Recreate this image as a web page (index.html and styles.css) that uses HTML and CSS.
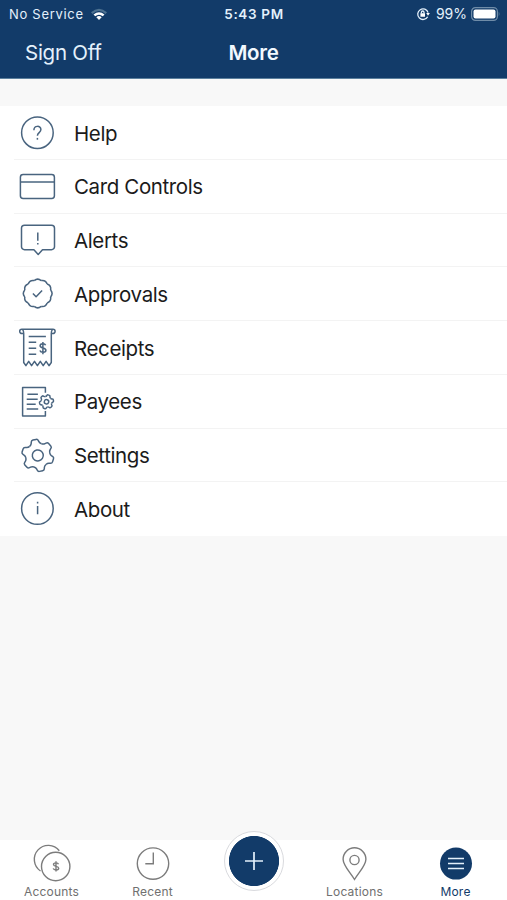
FILE: index.html
```html
<!DOCTYPE html>
<html lang="en">
<head>
<meta charset="utf-8">
<title>More</title>
<link rel="stylesheet" href="styles.css">
</head>
<body>
<svg class="defs" width="0" height="0">
  <defs>
    <path id="tooth" d="M-6.1-10.57Q-4.3-11.6-3.9-13.2L-3.6-14.4Q-3.2-16-1.6-16H1.6Q3.2-16 3.6-14.4L3.9-13.2Q4.3-11.6 6.1-10.57"/>
    <g id="gear">
      <use href="#tooth"/><use href="#tooth" transform="rotate(60)"/><use href="#tooth" transform="rotate(120)"/>
      <use href="#tooth" transform="rotate(180)"/><use href="#tooth" transform="rotate(240)"/><use href="#tooth" transform="rotate(300)"/>
    </g>
    <path id="scallop" d="M-3.45-12.9Q0-15.9 3.45-12.9"/>
    <g id="scallops"><use href="#scallop"/><use href="#scallop" transform="rotate(30)"/><use href="#scallop" transform="rotate(60)"/></g>
  </defs>
</svg>
<div class="app">
  <header class="header">
    <div class="status">
      <div class="carrier"><span>No Service</span>
        <svg width="18" height="14" viewBox="0 0 18 14"><path class="dim" d="M1 5.3Q9-2 17 5.3L15.5 7Q9 1 2.5 7Z"/><path d="M3.5 7.6Q9 2.8 14.5 7.6L12.8 9.3Q9 6 5.2 9.3ZM6.3 10.2Q9 8 11.7 10.2L9 13Z"/></svg>
      </div>
      <div class="time">5:43 PM</div>
      <div class="power">
        <svg class="lock" width="14" height="14" viewBox="0 0 14 14"><path class="line" d="M11.7 9.7A5.3 5.3 0 1 1 12.1 5.6"/><path d="M10.2 6h3.7L12 8.7ZM4.4 6.3h4.6v3.4H4.4Z"/><path class="line" d="M5.4 6.5V5.3a1.3 1.3 0 0 1 2.6 0v1.2"/></svg>
        <span>99%</span>
        <svg class="battery" width="30" height="14" viewBox="0 0 30 14"><rect class="shell" x=".6" y=".6" width="25.8" height="12.8" rx="3.8"/><rect x="2.5" y="2.5" width="22" height="9" rx="2"/><path class="dim" d="M27.6 4.8q2 2.2 0 4.4Z"/></svg>
      </div>
    </div>
    <div class="nav"><a class="signoff">Sign Off</a><h1>More</h1><span></span></div>
  </header>
  <main>
    <ul class="menu">
      <li><svg viewBox="0 0 40 40"><circle cx="20.4" cy="19.7" r="15.8"/><path d="M16.9 17.2c0-5 7-5 7-.6 0 3-3.5 3-3.5 6.1"/><path d="M20.4 24.9v1.8"/></svg><span>Help</span></li>
      <li><svg viewBox="0 0 40 40"><rect x="3.4" y="7.6" width="34" height="23.8" rx="2.7"/><path d="M3.4 14.9h34"/></svg><span>Card Controls</span></li>
      <li><svg viewBox="0 0 40 40"><path d="M7.5 4.2h27a3 3 0 0 1 3 3v18.5a3 3 0 0 1-3 3h-9l-4.3 4.8-4.3-4.8H7.5a3 3 0 0 1-3-3V7.2a3 3 0 0 1 3-3Z"/><path d="M20.8 11.5v8.2m0 2.200v1.600"/></svg><span>Alerts</span></li>
      <li><svg viewBox="0 0 40 40"><g transform="translate(20.7 19.5)"><use href="#scallops"/><use href="#scallops" transform="rotate(90)"/><use href="#scallops" transform="rotate(180)"/><use href="#scallops" transform="rotate(270)"/></g><path d="m15.9 19.5 3.2 3.2 6-6.2"/></svg><span>Approvals</span></li>
      <li><svg viewBox="0 0 40 40"><path d="M6.2 5.5H4.8a2.1 2.1 0 1 1 0-4.200h31.200a2.100 2.100 0 1 1 0 4.200H34.800M5.500 1.500q1.200 1 1.200 4V34.500l2.200 3.200 2.800-4.400 2.900 4.400 2.900-4.400 2.900 4.400 2.900-4.400 2.900 4.400 2.900-4.400 2.900 4.400 2.300-3.200V5.500q0-3 1.200-4"/><path d="M11.700 8.500h17.200M11.700 14.200h7.500M11.700 20.200h7.500M11.700 26.200h7.500M28.600 17.200c-.8-2.200-5.500-2-5.500.5 0 3 5.800 1.500 5.800 4.500 0 2.700-5.200 2.700-6 .2M25.900 14v12.300"/></svg><span>Receipts</span></li>
      <li><svg viewBox="0 0 40 40"><path d="M28.400 10.800V5.600H5.600v28.500H28.400v-5.200M10.400 12.200h10.500M9.700 17.200h11M9.700 22.200h9M9.700 27h11.500"/><g class="minigear" transform="translate(29.500 19.800) rotate(18) scale(.44)"><use href="#gear"/><circle r="5"/></g></svg><span>Payees</span></li>
      <li><svg viewBox="0 0 40 40"><g transform="translate(20.800 19.400) rotate(-12)"><use href="#gear"/><circle r="5.500"/></g></svg><span>Settings</span></li>
      <li><svg viewBox="0 0 40 40"><circle cx="20.400" cy="19.500" r="15.800"/><path d="M20.600 17v8.300M20.600 12.700v1.800"/></svg><span>About</span></li>
    </ul>
  </main>
  <footer class="tabs">
    <a class="tab"><svg viewBox="0 0 40 40"><circle cx="23.700" cy="22.500" r="14.200"/><path d="M8.500 27A14 14 0 1 1 27.300 6.700"/><path d="M26.500 20.200c-.7-1.900-5-1.800-5 .3 0 2.600 5.200 1.200 5.200 3.800 0 2.200-4.800 2.200-5.500.1M24 17.200v10.400"/></svg><span>Accounts</span></a>
    <a class="tab"><svg viewBox="0 0 40 40"><circle cx="20" cy="19.600" r="15.700"/><path d="M20.300 8.500v11.200h-8"/></svg><span>Recent</span></a>
    <a class="tab add"><span class="disc"><svg width="20" height="20" viewBox="0 0 20 20"><path d="M10 1v18M1 10h18"/></svg></span></a>
    <a class="tab"><svg viewBox="0 0 40 40"><path d="M19.500 35.500C15 28 8.100 21.500 8.100 15.200a11.400 11.400 0 0 1 22.800 0C30.900 21.500 24 28 19.500 35.500Z"/><circle cx="19.500" cy="16" r="4.600"/></svg><span>Locations</span></a>
    <a class="tab active"><svg viewBox="0 0 40 40"><circle cx="20" cy="19.600" r="16"/><path d="M12 14.400h16M12 19.600h16M12 24.600h16"/></svg><span>More</span></a>
  </footer>
</div>
</body>
</html>
```
FILE: styles.css
```css
* { box-sizing: border-box; }
body { margin: 0; font-family: Inter, "Liberation Sans", sans-serif; background: #f8f8f8; }
.defs { position: absolute; }
.app { width: 507px; height: 900px; display: flex; flex-direction: column; overflow: hidden; }
.header { height: 79px; background: #123b69; color: #e4f1fc; border-bottom: 1px solid #5c809d; }
.status { height: 27px; padding: 0 6px 0 9px; display: grid; grid-template-columns: 1fr auto 1fr; align-items: center; font-size: 13px; }
.carrier, .power { display: flex; align-items: center; }
.carrier { gap: 6px; letter-spacing: .7px; }
.power { justify-content: flex-end; font-size: 14px; }
.time { font-weight: 600; letter-spacing: .65px; font-size: 13.5px; margin-right: 2px; }
.status svg { fill: #fff; }
.status .dim { fill: #4d7190; }
.status .line { fill: none; stroke: #e4f1fc; stroke-width: 1.3; }
.lock { margin-right: 6px; }
.battery { margin-left: 4px; }
.status .shell { fill: none; stroke: #6f8ca8; stroke-width: 1.2; }
.nav { height: 51px; padding-left: 25px; display: grid; grid-template-columns: 1fr auto 1fr; align-items: center; font-size: 20.5px; }
.signoff { letter-spacing: -.25px; }
h1 { margin: 0 12px 0 -13px; font-size: 20.5px; font-weight: 600; letter-spacing: -.3px; color: #f2f9ff; }
main { flex: 1; padding-top: 27px; }
.menu { margin: 0; padding: 0; list-style: none; background: #fff; height: 430px; display: grid; grid-template-rows: repeat(8, 1fr); }
.menu li { margin-left: 14px; padding: 1.6px 0 0 3px; display: flex; align-items: center; gap: 17px; font-size: 20.5px; color: #1b1b1b; border-bottom: 1px solid #f3f3f3; }
.menu li:last-child { border-bottom-color: #fff; }
.menu span { letter-spacing: -.38px; }
.menu svg { width: 40px; height: 40px; fill: none; stroke: #49647f; stroke-width: 1.5; stroke-linejoin: round; }
.menu .minigear { stroke-width: 3.3; }
.tabs { height: 60px; background: #fff; display: grid; grid-template-columns: repeat(5, 101px); justify-content: center; }
.tab { display: flex; flex-direction: column; align-items: center; padding-top: 4px; font-size: 12px; line-height: 15px; color: #707070; letter-spacing: .2px; }
.tab > svg { width: 40px; height: 40px; overflow: visible; fill: none; stroke: #7c7c7c; stroke-width: 1.4; }
.add { padding: 0; margin-top: -9px; }
.disc { width: 60px; height: 60px; border-radius: 50%; border: 1px solid #d9dade; background: radial-gradient(circle, #123b69 24.7px, #fff 25.4px); display: flex; align-items: center; justify-content: center; }
.disc svg { stroke: #e4f1fc; stroke-width: 1.7; }
.active { color: #123b69; }
.active > svg { stroke: #e4f1fc; stroke-width: 1.5; }
.active circle { fill: #123b69; stroke: none; }
```
